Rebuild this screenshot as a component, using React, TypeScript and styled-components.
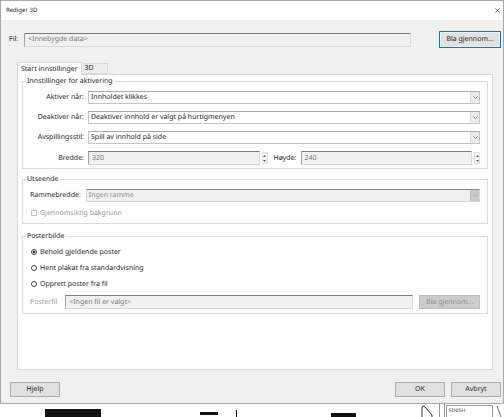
import styled, { createGlobalStyle } from 'styled-components'

const GlobalStyle = createGlobalStyle`
  html, body {
    margin: 0;
    padding: 0;
    background: #ffffff;
  }
  body {
    width: 504px;
    height: 417px;
    overflow: hidden;
    font-family: "Noto Sans", "Liberation Sans", Arial, sans-serif;
    font-size: 7px;
    color: #262626;
    text-rendering: geometricPrecision;
  }
  * {
    box-sizing: border-box;
  }
`

const Screen = styled.div`
  width: 504px;
  height: 417px;
  display: flex;
  flex-direction: column;
`

const Window = styled.div`
  width: 504px;
  height: 404px;
  flex: none;
  border: 1px solid #a9a9a9;
  background: #f0f0f0;
  display: flex;
  flex-direction: column;
  box-shadow: 0 1px 2px rgba(0, 0, 0, 0.15);
`

const TitleBar = styled.div`
  height: 19px;
  flex: none;
  background: #ffffff;
  display: flex;
  align-items: center;
  justify-content: space-between;
  padding: 0 3px 1px 5px;
`

const Title = styled.span`
  font-size: 6px;
`

const Body = styled.div`
  flex: 1;
  display: flex;
  flex-direction: column;
  padding: 11px 2px 6px 8px;
`

const FileRow = styled.div`
  display: flex;
  align-items: center;
  height: 17px;
`

const FileLabel = styled.span`
  width: 15px;
  flex: none;
`

const SunkenField = styled.div<{ $width?: number }>`
  width: ${({ $width }) => ($width ? `${$width}px` : 'auto')};
  flex: ${({ $width }) => ($width ? 'none' : '1')};
  height: 14px;
  background: #f0f0f0;
  border: 1px solid #dadada;
  border-top-color: #7e7e7e;
  border-left-color: #a3a3a3;
  color: #7a7a7a;
  display: flex;
  align-items: center;
  padding-left: 3px;
  white-space: nowrap;
  overflow: hidden;
`

const Button = styled.div<{ $width: number; $variant?: 'default' | 'disabled' }>`
  width: ${({ $width }) => $width}px;
  height: ${({ $variant }) => ($variant === 'disabled' ? 14 : 15)}px;
  flex: none;
  display: flex;
  align-items: center;
  justify-content: center;
  background: ${({ $variant }) => ($variant === 'disabled' ? '#cccccc' : '#e1e1e1')};
  color: ${({ $variant }) => ($variant === 'disabled' ? '#8f8f8f' : '#262626')};
  border: 1px solid
    ${({ $variant }) =>
      $variant === 'default' ? '#0078d7' : $variant === 'disabled' ? '#bfbfbf' : '#adadad'};
  box-shadow: ${({ $variant }) => ($variant === 'default' ? 'inset 0 0 0 1px #e5f1fb' : 'none')};
`

const BrowseButton = styled(Button)`
  height: 17px;
  margin-left: auto;
`

const TabStrip = styled.div`
  margin: 14px 0 0 8px;
  display: flex;
  align-items: flex-end;
  height: 12px;
  position: relative;
  z-index: 1;
`

const Tab = styled.div<{ $active?: boolean }>`
  height: ${({ $active }) => ($active ? 13 : 11)}px;
  margin-bottom: ${({ $active }) => ($active ? -1 : 0)}px;
  padding: ${({ $active }) => ($active ? '0 3px' : '0 13px 0 3px')};
  display: flex;
  align-items: center;
  background: ${({ $active }) => ($active ? '#ffffff' : '#ececec')};
  border: 1px solid #d9d9d9;
  border-bottom: ${({ $active }) => ($active ? 'none' : '1px solid #d9d9d9')};
  border-left: ${({ $active }) => ($active ? '1px solid #d9d9d9' : 'none')};
`

const Panel = styled.div`
  margin-left: 8px;
  width: 476px;
  height: 296px;
  background: #ffffff;
  border: 1px solid #d9d9d9;
  padding: 2px 4px 0 4px;
  display: flex;
  flex-direction: column;
  gap: 6px;
`

const Group = styled.fieldset<{ $height: number; $offset?: number }>`
  margin: ${({ $offset }) => $offset ?? 0}px 0 0 0;
  height: ${({ $height }) => $height}px;
  border: 1px solid #dcdcdc;
  padding: 0 7px 0 7px;
  display: flex;
  flex-direction: column;
`

const Legend = styled.legend`
  padding: 0 1px;
  margin-left: -4px;
  line-height: 9px;
`

const FormGrid = styled.div`
  margin-top: 5px;
  display: grid;
  grid-template-columns: 54px 1fr;
  column-gap: 4px;
  row-gap: 7px;
  align-items: center;
`

const RowLabel = styled.span<{ $align?: 'left' | 'right'; $muted?: boolean }>`
  text-align: ${({ $align }) => $align ?? 'right'};
  color: ${({ $muted }) => ($muted ? '#9a9a9a' : 'inherit')};
  white-space: nowrap;
`

const SelectBox = styled.div<{ $disabled?: boolean }>`
  height: 13px;
  display: flex;
  align-items: stretch;
  background: ${({ $disabled }) => ($disabled ? '#f0f0f0' : '#ffffff')};
  border: 1px solid ${({ $disabled }) => ($disabled ? '#d6d6d6' : '#c4c4c4')};
  border-top-color: ${({ $disabled }) => ($disabled ? '#8a8a8a' : '#a9a9a9')};
  color: ${({ $disabled }) => ($disabled ? '#8d8d8d' : '#262626')};
`

const SelectText = styled.span`
  flex: 1;
  display: flex;
  align-items: center;
  padding-left: 2px;
  white-space: nowrap;
`

const ArrowBox = styled.span<{ $disabled?: boolean }>`
  width: 9px;
  display: flex;
  align-items: center;
  justify-content: center;
  background: ${({ $disabled }) => ($disabled ? '#c9c9c9' : '#ececec')};
  border-left: 1px solid ${({ $disabled }) => ($disabled ? '#c0c0c0' : '#dedede')};
`

const NumberRow = styled.div`
  display: flex;
  align-items: center;
`

const NumberField = styled.div`
  flex: 1;
  display: flex;
  align-items: center;
  gap: 2px;
`

const Spinner = styled.span`
  width: 6px;
  height: 12px;
  flex: none;
  display: flex;
  flex-direction: column;
  justify-content: space-around;
  align-items: center;
  background: #f7f7f7;
  border: 1px solid #e0e0e0;
`

const SizeLabel = styled.span`
  margin: 0 4px 0 6px;
`

const OptionRow = styled.label<{ $disabled?: boolean; $spaced?: boolean }>`
  display: flex;
  align-items: center;
  gap: 3px;
  height: 10px;
  margin: ${({ $spaced }) => ($spaced ? 6 : 0)}px 0 0 1px;
  color: ${({ $disabled }) => ($disabled ? '#9a9a9a' : 'inherit')};
`

const CheckBox = styled.span`
  width: 6px;
  height: 6px;
  border: 1px solid #c6c6c6;
  background: #fff;
`

const Radio = styled.span<{ $checked?: boolean }>`
  width: 6px;
  height: 6px;
  border-radius: 50%;
  border: 1px solid #444;
  background: ${({ $checked }) =>
    $checked ? 'radial-gradient(circle, #222 0 1.4px, #fff 1.6px)' : '#fff'};
`

const AppearanceRow = styled.div`
  margin-top: 5px;
  display: flex;
  align-items: center;
  gap: 5px;
`

const AppearanceSelect = styled(SelectBox)`
  flex: 1;
`

const RadioList = styled.div`
  margin-top: 6px;
  display: flex;
  flex-direction: column;
  gap: 6px;
`

const PosterRow = styled.div`
  display: flex;
  align-items: center;
  gap: 6px;
`

const PosterField = styled(SunkenField)`
  margin-left: 2px;
`

const Footer = styled.div`
  margin-top: auto;
  display: flex;
  align-items: center;
  gap: 6px;
  padding-left: 1px;
`

const HelpButton = styled(Button)`
  margin-right: auto;
`

const Desktop = styled.div`
  flex: 1;
  position: relative;
  background: #ffffff;
  overflow: hidden;
`

const Blob = styled.div<{ $x: number; $y: number; $w: number; $h: number }>`
  position: absolute;
  left: ${({ $x }) => $x}px;
  top: ${({ $y }) => $y}px;
  width: ${({ $w }) => $w}px;
  height: ${({ $h }) => $h}px;
  background: #111;
`

const Rule = styled.div<{ $x: number }>`
  position: absolute;
  left: ${({ $x }) => $x}px;
  top: 0;
  width: 1px;
  height: 14px;
  background: #9a9a9a;
`

const FinishTag = styled.div`
  position: absolute;
  left: 446px;
  top: 1px;
  width: 47px;
  height: 16px;
  border: 1px solid #9a9a9a;
  padding: 2px 0 0 2px;
  font-size: 5px;
  color: #333;
`

const Doodle = styled.svg<{ $x: number }>`
  position: absolute;
  left: ${({ $x }) => $x}px;
  top: 1px;
`

function Chevron({ color = '#6b6b6b' }: { color?: string }) {
  return (
    <svg width="5" height="3" viewBox="0 0 5 3">
      <path d="M0.5 0.5 L2.5 2.5 L4.5 0.5" fill="none" stroke={color} strokeWidth="0.8" />
    </svg>
  )
}

function SpinArrows() {
  return (
    <>
      <svg width="3" height="2" viewBox="0 0 3 2">
        <path d="M0 2 L1.5 0 L3 2 Z" fill="#606060" />
      </svg>
      <svg width="3" height="2" viewBox="0 0 3 2">
        <path d="M0 0 L1.5 2 L3 0 Z" fill="#606060" />
      </svg>
    </>
  )
}

function Select({ value, disabled }: { value: string; disabled?: boolean }) {
  return (
    <SelectBox $disabled={disabled}>
      <SelectText>{value}</SelectText>
      <ArrowBox $disabled={disabled}>
        <Chevron color={disabled ? '#9a9a9a' : '#6b6b6b'} />
      </ArrowBox>
    </SelectBox>
  )
}

function App() {
  return (
    <>
      <GlobalStyle />
      <Screen>
        <Window>
          <TitleBar>
            <Title>Rediger 3D</Title>
            <svg width="5" height="5" viewBox="0 0 5 5">
              <path d="M0.3 0.3 L4.7 4.7 M4.7 0.3 L0.3 4.7" stroke="#333" strokeWidth="0.6" />
            </svg>
          </TitleBar>
          <Body>
            <FileRow>
              <FileLabel>Fil:</FileLabel>
              <SunkenField $width={387}>&lt;Innebygde data&gt;</SunkenField>
              <BrowseButton $width={62} $variant="default">
                Bla gjennom...
              </BrowseButton>
            </FileRow>

            <TabStrip>
              <Tab $active>Start innstillinger</Tab>
              <Tab>3D</Tab>
            </TabStrip>
            <Panel>
              <Group $height={92}>
                <Legend>Innstillinger for aktivering</Legend>
                <FormGrid>
                  <RowLabel>Aktiver når:</RowLabel>
                  <Select value="Innholdet klikkes" />
                  <RowLabel>Deaktiver når:</RowLabel>
                  <Select value="Deaktiver innhold er valgt på hurtigmenyen" />
                  <RowLabel>Avspillingsstil:</RowLabel>
                  <Select value="Spill av innhold på side" />
                  <RowLabel>Bredde:</RowLabel>
                  <NumberRow>
                    <NumberField>
                      <SunkenField>320</SunkenField>
                      <Spinner>
                        <SpinArrows />
                      </Spinner>
                    </NumberField>
                    <SizeLabel>Høyde:</SizeLabel>
                    <NumberField>
                      <SunkenField>240</SunkenField>
                      <Spinner>
                        <SpinArrows />
                      </Spinner>
                    </NumberField>
                  </NumberRow>
                </FormGrid>
              </Group>

              <Group $height={49}>
                <Legend>Utseende</Legend>
                <AppearanceRow>
                  <RowLabel $align="left">Rammebredde:</RowLabel>
                  <AppearanceSelect $disabled>
                    <SelectText>Ingen ramme</SelectText>
                    <ArrowBox $disabled>
                      <Chevron color="#9a9a9a" />
                    </ArrowBox>
                  </AppearanceSelect>
                </AppearanceRow>
                <OptionRow $disabled $spaced>
                  <CheckBox />
                  Gjennomsiktig bakgrunn
                </OptionRow>
              </Group>

              <Group $height={82} $offset={2}>
                <Legend>Posterbilde</Legend>
                <RadioList>
                  <OptionRow>
                    <Radio $checked />
                    Behold gjeldende poster
                  </OptionRow>
                  <OptionRow>
                    <Radio />
                    Hent plakat fra standardvisning
                  </OptionRow>
                  <OptionRow>
                    <Radio />
                    Opprett poster fra fil
                  </OptionRow>
                  <PosterRow>
                    <RowLabel $align="left" $muted>
                      Posterfil
                    </RowLabel>
                    <PosterField $width={348}>&lt;Ingen fil er valgt&gt;</PosterField>
                    <Button $width={61} $variant="disabled">
                      Bla gjennom...
                    </Button>
                  </PosterRow>
                </RadioList>
              </Group>
            </Panel>

            <Footer>
              <HelpButton $width={50}>Hjelp</HelpButton>
              <Button $width={50}>OK</Button>
              <Button $width={50}>Avbryt</Button>
            </Footer>
          </Body>
        </Window>
        <Desktop>
          <Blob $x={45} $y={5} $w={56} $h={10} />
          <Blob $x={200} $y={8} $w={18} $h={3} />
          <Blob $x={236} $y={6} $w={1} $h={10} />
          <Blob $x={331} $y={9} $w={25} $h={8} />
          <Doodle $x={420} width="14" height="13" viewBox="0 0 14 13">
            <path d="M2 13 L2 2 Q3 0 5 2 L12 10 L12 13" fill="none" stroke="#333" strokeWidth="1" />
          </Doodle>
          <Rule $x={439} />
          <Rule $x={444} />
          <FinishTag>FINISH</FinishTag>
          <Doodle $x={496} width="6" height="13" viewBox="0 0 6 13">
            <path d="M1 1 L5 12" stroke="#444" strokeWidth="0.8" />
          </Doodle>
        </Desktop>
      </Screen>
    </>
  )
}

export default App
